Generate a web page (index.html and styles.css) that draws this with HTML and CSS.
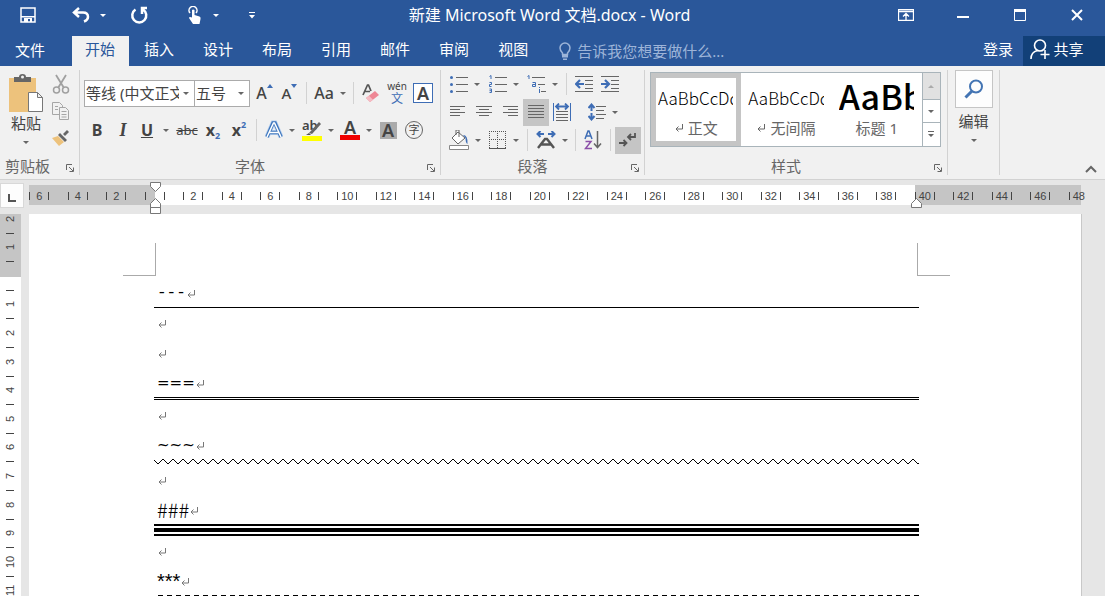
FILE: index.html
```html
<!DOCTYPE html>
<html lang="zh-CN">
<head>
  <meta charset="UTF-8">
  <meta name="viewport" content="width=device-width, initial-scale=1">
  <title>新建 Microsoft Word 文档.docx - Word</title>
  <link rel="stylesheet" href="styles.css">
</head>
<body>
  <svg class="defs" aria-hidden="true">
    <symbol id="ret" viewBox="0 0 8 8"><path d="M7.500 0v5H1M3.500 2.500L1 5l2.500 2.500" fill="none" stroke="currentColor"/></symbol>
    <symbol id="launch" viewBox="0 0 8 8"><path d="M.5 6V.5H6M3 3l4 4M7.500 3.500v4h-4" fill="none" stroke="currentColor"/></symbol>
  </svg>

  <!-- Thanh tiêu đề -->
  <header class="titlebar">
    <div class="quick">
      <button class="q-btn q-save" aria-label="保存"><svg width="16" height="16" viewBox="0 0 16 16"><path d="M1 1h14v14H1z" fill="none" stroke="#fff" stroke-width="1.500"/><path d="M1 9h14v1.500H1zM4 11h8v4h-2v-3H8v3H4z" fill="#fff"/></svg></button>
      <button class="q-btn q-undo" aria-label="撤消"><svg width="18" height="16" viewBox="0 0 18 16"><path d="M7 1L2 5.500 7 10M2 5.500h9q5 0 5 4.500 0 3-4 4.500" fill="none" stroke="#fff" stroke-width="2.500"/></svg><i class="caret"></i></button>
      <button class="q-btn q-redo" aria-label="重复"><svg width="18" height="18" viewBox="0 0 18 18"><path d="M5.500 3.500a7 7 0 1 0 7.500 0M12 8V2h5" fill="none" stroke="#fff" stroke-width="2.500"/></svg></button>
      <button class="q-btn q-touch" aria-label="触摸模式"><svg width="16" height="18" viewBox="0 0 16 18"><path d="M3 7a4 4 0 1 1 6 0" fill="none" stroke="#fff" stroke-width="1.500"/><path d="M5 4q1-1 2.500 0v5l5 1.500q1.500.5 1 2.500l-1 5H6l-4-6q0-1.500 3-.5z" fill="#fff"/></svg><i class="caret"></i></button>
      <button class="q-btn q-more" aria-label="自定义快速访问工具栏"><svg width="6" height="7" viewBox="0 0 6 7"><path d="M0 0h6v1H0zM0 3h6L3 6.500z" fill="#fff"/></svg></button>
    </div>
    <h1>新建 Microsoft Word 文档.docx - Word</h1>
    <div class="window-btns">
      <button aria-label="功能区显示选项"><svg width="16" height="12" viewBox="0 0 16 12"><path d="M.5.500h15v11H.500zM.500 2.500h15M8 11V5M5 7.500l3-3 3 3" fill="none" stroke="#fff" stroke-width="1.300"/></svg></button>
      <button aria-label="最小化"><svg width="12" height="12" viewBox="0 0 12 12"><path d="M0 7h12v2H0z" fill="#fff"/></svg></button>
      <button aria-label="最大化"><svg width="12" height="12" viewBox="0 0 12 12"><path d="M.5.500h11v11H.500z" fill="none" stroke="#fff"/><path d="M0 0h12v3H0z" fill="#fff"/></svg></button>
      <button aria-label="关闭"><svg width="12" height="12" viewBox="0 0 12 12"><path d="M1 1l10 10M11 1L1 11" stroke="#fff" stroke-width="2"/></svg></button>
    </div>
  </header>

  <!-- Các thẻ -->
  <nav class="tabs">
    <button class="tab file">文件</button>
    <button class="tab active">开始</button>
    <button class="tab">插入</button>
    <button class="tab">设计</button>
    <button class="tab">布局</button>
    <button class="tab">引用</button>
    <button class="tab">邮件</button>
    <button class="tab">审阅</button>
    <button class="tab">视图</button>
    <label class="tell">
      <svg width="12" height="18" viewBox="0 0 12 18"><path d="M3.500 12.500V11Q1 8.500 1 6a5 5 0 0 1 10 0q0 2.500-2.500 5v1.500z" fill="none" stroke="#9db4d8" stroke-width="1.500"/><path d="M3 13h6v2.500H3zM4 16.500h4V18H4z" fill="#9db4d8"/></svg>
      <input type="text" placeholder="告诉我您想要做什么..." aria-label="告诉我您想要做什么">
    </label>
    <button class="login">登录</button>
    <button class="share"><svg width="20" height="20" viewBox="0 0 20 20"><circle cx="10" cy="6.500" r="5.500" fill="none" stroke="#fff" stroke-width="1.600"/><path d="M1 20q0-7 6.500-8.500M15 11v9M10.500 15.500h9" fill="none" stroke="#fff" stroke-width="1.600"/></svg>共享</button>
  </nav>

  <!-- Ribbon -->
  <section class="ribbon">
    <div class="group clipboard">
      <div class="group-body">
        <button class="paste">
          <svg width="34" height="38" viewBox="0 0 34 38"><path d="M0 4h27v34H0z" fill="#edc27c"/><path d="M5 8V3h5q0-3 3.500-3T17 3h5v5z" fill="#666"/><circle cx="13.500" cy="3" r="1.500" fill="#f1f1f1"/><path d="M19.500 18.500h9l5 5v14h-14zM28.500 18.500v5h5" fill="#fff" stroke="#777"/></svg>
          粘贴
          <i class="caret"></i>
        </button>
        <div class="clip-tools">
          <button aria-label="剪切"><svg width="18" height="20" viewBox="0 0 18 20"><path d="M4 1l8 13M14 1L6 14" stroke="#a0a0a0" stroke-width="1.800"/><g fill="none" stroke="#a0a0a0" stroke-width="1.500"><circle cx="4.500" cy="16" r="3"/><circle cx="13.500" cy="16" r="3"/></g></svg></button>
          <button aria-label="复制"><svg width="18" height="18" viewBox="0 0 18 18"><g fill="#f1f1f1" stroke="#a6a6a6"><path d="M.5.500h7l3 3v9H.500z"/><path d="M7.500 5.500h6l3 3v9h-9z"/></g><path d="M3 4.500h3M3 7.500h3M9.500 9.500h5M9.500 12.500h5M9.500 15h5" stroke="#a6a6a6"/></svg></button>
          <button aria-label="格式刷"><svg width="18" height="18" viewBox="0 0 18 18"><path d="M0 9l6-2 6 6-5 4z" fill="#edc27c"/><path d="M6 6l2-2 7 7-2 2zM11 5l4-4 2 2-4 4z" fill="#666"/></svg></button>
        </div>
      </div>
      <div class="group-foot"><span>剪贴板</span><button class="launcher" aria-label="剪贴板设置"><svg width="8" height="8"><use href="#launch"/></svg></button></div>
    </div>

    <div class="group font">
      <div class="group-body">
        <div class="row">
          <label class="combo combo-font"><select aria-label="字体"><option>等线 (中文正文)</option></select><i class="caret"></i></label>
          <label class="combo combo-size"><select aria-label="字号"><option>五号</option></select><i class="caret"></i></label>
          <button class="tool grow" aria-label="增大字号"><b class="letter">A</b><svg width="6" height="4" viewBox="0 0 6 4"><path d="M0 4l3-4 3 4z" fill="#3e6db5"/></svg></button>
          <button class="tool grow" aria-label="缩小字号"><b class="letter small">A</b><svg width="6" height="4" viewBox="0 0 6 4"><path d="M0 0h6L3 4z" fill="#3e6db5"/></svg></button>
          <i class="sep"></i>
          <button class="tool split" aria-label="更改大小写"><span class="letter">Aa</span><i class="caret"></i></button>
          <i class="sep"></i>
          <button class="tool" aria-label="清除格式"><svg width="18" height="20" viewBox="0 0 18 20"><path d="M1 12L5.500 2h1L9 8M3 8.500h5" fill="none" stroke="#555" stroke-width="1.700"/><path d="M4 15l9-7 4 4-9 7z" fill="#ee8795"/><path d="M4 15l3-2.300 4 4L8 19z" fill="#f6bcc4"/></svg></button>
          <button class="tool pinyin" aria-label="拼音指南"><span>wén</span><em>文</em></button>
          <button class="tool" aria-label="字符边框"><b class="boxed">A</b></button>
        </div>
        <div class="row">
          <button class="tool bold">B</button>
          <button class="tool italic">I</button>
          <button class="tool split underline"><u>U</u><i class="caret"></i></button>
          <button class="tool strike">abc</button>
          <button class="tool script">x<sub>2</sub></button>
          <button class="tool script">x<sup>2</sup></button>
          <i class="sep"></i>
          <button class="tool split" aria-label="文本效果"><svg width="18" height="20" viewBox="0 0 18 20"><path d="M2 17L8 3h2l6 14M4.500 12.500h9" fill="none" stroke="#b8d0ee" stroke-width="5"/><path d="M2 17L8 3h2l6 14M4.500 12.500h9" fill="none" stroke="#3e76bd" stroke-width="3.500"/><path d="M2 17L8.500 3h1L16 17M4.500 12.500h9" fill="none" stroke="#fff" stroke-width="1.500"/></svg><i class="caret"></i></button>
          <button class="tool split highlight" aria-label="突出显示"><span>ab</span><svg width="20" height="20" viewBox="0 0 20 20"><path d="M7 12L17 1l2 2L10 13z" fill="#666"/><path d="M4 14l3-2 2 2z" fill="#555"/><path d="M0 15h20v5H0z" fill="#ff0"/></svg><i class="caret"></i></button>
          <button class="tool split" aria-label="字体颜色"><b class="colored">A</b><i class="caret"></i></button>
          <button class="tool" aria-label="字符底纹"><b class="shaded">A</b></button>
          <button class="tool" aria-label="带圈字符"><span class="circled">字</span></button>
        </div>
      </div>
      <div class="group-foot"><span>字体</span><button class="launcher" aria-label="字体设置"><svg width="8" height="8"><use href="#launch"/></svg></button></div>
    </div>

    <div class="group para">
      <div class="group-body">
        <div class="row">
          <button class="tool split" aria-label="项目符号"><svg width="18" height="18" viewBox="0 0 18 18"><path d="M6 2.500h12M6 9.500h12M6 16.500h12" stroke="#666"/><g fill="#3e6db5"><circle cx="1.500" cy="2.500" r="1.500"/><circle cx="1.500" cy="9.500" r="1.500"/><circle cx="1.500" cy="16.500" r="1.500"/></g></svg><i class="caret"></i></button>
          <button class="tool split" aria-label="编号"><svg width="18" height="18" viewBox="0 0 18 18"><path d="M6 2.500h12M6 9.500h12M6 16.500h12" stroke="#666"/><path d="M.5 1.500L2 .5V4M.500 7.500h2v2h-2v2h2M.500 14h2v3.500h-2M.500 15.700h2" fill="none" stroke="#3e6db5"/></svg><i class="caret"></i></button>
          <button class="tool split" aria-label="多级列表"><svg width="19" height="18" viewBox="0 0 19 18"><path d="M5 2.500h13M11 9.500h7M14 16.500h5" stroke="#666"/><path d="M.5 1.500L2 .5V4M5.500 7.500h3v4h-3v-2h3M12.500 14v4M12.500 12v1" fill="none" stroke="#3e6db5"/></svg><i class="caret"></i></button>
          <i class="sep"></i>
          <button class="tool" aria-label="减少缩进量"><svg width="18" height="16" viewBox="0 0 18 16"><path d="M0 .5h18M10 4.500h8M10 8.500h8M10 12.500h8M0 15.500h18" stroke="#666"/><path d="M9 8H2M5 4L1 8l4 4" fill="none" stroke="#3e6db5" stroke-width="2.200"/></svg></button>
          <button class="tool" aria-label="增加缩进量"><svg width="18" height="16" viewBox="0 0 18 16"><path d="M0 .5h18M10 4.500h8M10 8.500h8M10 12.500h8M0 15.500h18" stroke="#666"/><path d="M0 8h7M4 4l4 4-4 4" fill="none" stroke="#3e6db5" stroke-width="2.200"/></svg></button>
        </div>
        <div class="row">
          <button class="tool" aria-label="左对齐"><svg width="16" height="12" viewBox="0 0 16 12"><path d="M0 .5h15M0 3.500h10M0 6.500h15M0 9.500h10" stroke="#666"/></svg></button>
          <button class="tool" aria-label="居中"><svg width="16" height="12" viewBox="0 0 16 12"><path d="M0 .5h16M3 3.500h10M0 6.500h16M3 9.500h10" stroke="#666"/></svg></button>
          <button class="tool" aria-label="右对齐"><svg width="16" height="12" viewBox="0 0 16 12"><path d="M1 .5h15M6 3.500h10M1 6.500h15M6 9.500h10" stroke="#666"/></svg></button>
          <button class="tool on" aria-label="两端对齐"><svg width="16" height="14" viewBox="0 0 16 14"><path d="M0 .5h16M0 3.500h16M0 6.500h16M0 9.500h16M0 12.500h16" stroke="#666"/></svg></button>
          <button class="tool" aria-label="分散对齐"><svg width="18" height="18" viewBox="0 0 18 18"><path d="M.5 0v18M17.500 0v18" stroke="#3e6db5"/><path d="M3 3.500h12M6 .5l-3 3 3 3M12 .5l3 3-3 3" fill="none" stroke="#3e6db5" stroke-width="1.800"/><path d="M3 8.500h12M3 11.500h12M3 14.500h12M3 17.500h12" stroke="#666"/></svg></button>
          <button class="tool split spacing" aria-label="行距"><svg width="18" height="18" viewBox="0 0 18 18"><path d="M3.500 1v16M.500 5l3-3.500 3 3.500M.500 13l3 3.500 3-3.500" fill="none" stroke="#3e6db5" stroke-width="2"/><path d="M2 8h3v2H2z" fill="#f1f1f1"/><path d="M8 3.500h10M8 7.500h8M8 11.500h10M8 15.500h8" stroke="#666"/></svg><i class="caret"></i></button>
        </div>
        <div class="row">
          <button class="tool split" aria-label="底纹"><svg width="20" height="20" viewBox="0 0 20 20"><path d="M3 8l6-6 7 6-7 6zM7 5V0h3v7" fill="#fff" stroke="#666"/><path d="M14 5q5 0 4.500 9-2-1-2-6z" fill="#3e6db5"/><path d="M.5 15.500h19v4H.500z" fill="#fff" stroke="#888"/></svg><i class="caret"></i></button>
          <button class="tool split" aria-label="边框"><svg width="18" height="18" viewBox="0 0 18 18"><path d="M0 .5h17M.5 0v17M16.500 0v17M8.500 0v17M0 8.500h17" fill="none" stroke="#555" stroke-dasharray="1 1"/><path d="M0 17.500h17" stroke="#555"/></svg><i class="caret"></i></button>
          <i class="sep"></i>
          <button class="tool split wide-a" aria-label="中文版式"><svg width="20" height="18" viewBox="0 0 20 18"><path d="M8 3H2M4.500 0L1.500 3l3 3M12 3h6M15.500 0l3 3-3 3" fill="none" stroke="#3e6db5" stroke-width="2"/><path d="M2 17L9 8h2l7 9M5 13.500h10" fill="none" stroke="#555" stroke-width="2.400"/></svg><i class="caret"></i></button>
          <i class="sep"></i>
          <button class="tool" aria-label="排序"><svg width="18" height="20" viewBox="0 0 18 20"><path d="M1 9l3-8h1l3 8M2 6h5" fill="none" stroke="#3e6db5" stroke-width="1.500"/><path d="M1.500 11.500H7L1.500 18.500H8" fill="none" stroke="#8b4fa8" stroke-width="1.500"/><path d="M13.500 1v16M10 13.500l3.500 4 3.500-4" fill="none" stroke="#666" stroke-width="1.500"/></svg></button>
          <i class="sep"></i>
          <button class="tool on" aria-label="显示编辑标记"><svg width="18" height="16" viewBox="0 0 18 16"><path d="M16 1v4H9M12 2L9 5l3 3M0 11h7M4.500 8l3 3-3 3" fill="none" stroke="#555" stroke-width="1.800"/></svg></button>
        </div>
      </div>
      <div class="group-foot"><span>段落</span><button class="launcher" aria-label="段落设置"><svg width="8" height="8"><use href="#launch"/></svg></button></div>
    </div>

    <div class="group styles">
      <div class="group-body">
        <div class="gallery">
          <button class="style selected"><span class="preview">AaBbCcDd</span><span class="style-name"><svg width="8" height="8"><use href="#ret"/></svg>正文</span></button>
          <button class="style"><span class="preview">AaBbCcDd</span><span class="style-name"><svg width="8" height="8"><use href="#ret"/></svg>无间隔</span></button>
          <button class="style"><span class="preview heading">AaBb</span><span class="style-name">标题 1</span></button>
          <div class="gallery-scroll">
            <button disabled aria-label="向上"><i class="caret up"></i></button>
            <button aria-label="向下"><i class="caret"></i></button>
            <button aria-label="其他"><svg width="6" height="7" viewBox="0 0 6 7"><path d="M0 0h6v1H0zM0 3h6L3 6z" fill="#666"/></svg></button>
          </div>
        </div>
      </div>
      <div class="group-foot"><span>样式</span><button class="launcher" aria-label="样式设置"><svg width="8" height="8"><use href="#launch"/></svg></button></div>
    </div>

    <div class="group edit">
      <button class="find">
        <span class="find-icon"><svg width="20" height="20" viewBox="0 0 20 20"><circle cx="12" cy="7.500" r="6" fill="none" stroke="#4374b3" stroke-width="2"/><path d="M8 12l-6.500 6.500" stroke="#4374b3" stroke-width="3"/></svg></span>
        编辑
        <i class="caret"></i>
      </button>
    </div>
    <button class="collapse" aria-label="折叠功能区"><svg width="12" height="8" viewBox="0 0 12 8"><path d="M1 7l5-5 5 5" fill="none" stroke="#666" stroke-width="2"/></svg></button>
  </section>

  <!-- Vùng soạn thảo -->
  <main class="workspace">
    <div class="corner"><button aria-label="制表符"><svg width="8" height="8" viewBox="0 0 8 8"><path d="M1 0v7h7" fill="none" stroke="#555" stroke-width="2"/></svg></button></div>
    <div class="ruler">
      <div class="ruler-labels">
        <span>6</span><span>4</span><span>2</span><span></span><span>2</span><span>4</span><span>6</span><span>8</span><span>10</span><span>12</span><span>14</span><span>16</span><span>18</span><span>20</span><span>22</span><span>24</span><span>26</span><span>28</span><span>30</span><span>32</span><span>34</span><span>36</span><span>38</span><span>40</span><span>42</span><span>44</span><span>46</span><span>48</span>
      </div>
      <svg class="indent-left" width="12" height="32" viewBox="0 0 12 32"><path d="M1.500.500h10v4l-5 5-5-5zM1.500 25.500v-4l5-5 5 5v4zM1.500 25.500h10v6h-10z" fill="#fff" stroke="#777"/></svg>
      <svg class="indent-right" width="12" height="10" viewBox="0 0 12 10"><path d="M.5 9.500v-4l5-5 5 5v4z" fill="#fff" stroke="#777"/></svg>
    </div>
    <div class="v-ruler">
      <div class="v-labels">
        <span>2</span><span>1</span><span></span><span>1</span><span>2</span><span>3</span><span>4</span><span>5</span><span>6</span><span>7</span><span>8</span><span>9</span><span>10</span><span>11</span>
      </div>
    </div>
    <article class="page">
      <div class="crop-marks"><i></i><i></i></div>
      <div class="text">
        <p class="ruled dash">---<svg class="ret"><use href="#ret"/></svg></p>
        <hr class="thin">
        <p><svg class="ret"><use href="#ret"/></svg></p>
        <p><svg class="ret"><use href="#ret"/></svg></p>
        <p class="ruled wide">===<svg class="ret"><use href="#ret"/></svg></p>
        <hr class="double">
        <p><svg class="ret"><use href="#ret"/></svg></p>
        <p class="ruled wide">~~~<svg class="ret"><use href="#ret"/></svg></p>
        <svg class="wave" height="6"><defs><pattern id="zig" width="10" height="6" patternUnits="userSpaceOnUse"><path d="M-1 0L4 5 9 0 14 5" fill="none" stroke="#000"/></pattern></defs><rect width="100%" height="6" fill="url(#zig)"/></svg>
        <p><svg class="ret"><use href="#ret"/></svg></p>
        <p class="ruled hash">###<svg class="ret"><use href="#ret"/></svg></p>
        <hr class="triple">
        <p><svg class="ret"><use href="#ret"/></svg></p>
        <p class="ruled">***<svg class="ret"><use href="#ret"/></svg></p>
        <hr class="dashed">
      </div>
    </article>
  </main>
</body>
</html>
```
FILE: styles.css
```css
* {
  margin: 0;
  padding: 0;
  box-sizing: border-box;
}
body {
  display: flex;
  flex-direction: column;
  height: 100vh;
  overflow: hidden;
  background: #e6e6e6;
  color: #444;
  font: 15px/20px "Noto Sans", "Noto Sans CJK SC", sans-serif;
}
button, input, select {
  border: none;
  background: none;
  color: inherit;
  font: inherit;
}
button {
  display: flex;
  align-items: center;
  justify-content: center;
}
svg {
  display: block;
  flex: none;
}
.defs {
  position: absolute;
  width: 0;
  height: 0;
}
.caret {
  flex: none;
  border: 3px solid transparent;
  border-top-color: #666;
  border-bottom: none;
}

/* title bar */
.titlebar {
  display: grid;
  grid-template-columns: 1fr auto 1fr;
  align-items: center;
  height: 30px;
  background: #2a579a;
  color: #fff;
}
.titlebar h1 {
  margin-right: 6px;
  font-size: 16px;
  font-weight: normal;
}
.titlebar .caret {
  border-top-color: #fff;
}
.quick, .window-btns {
  display: flex;
}
.window-btns {
  justify-content: flex-end;
}
.window-btns button {
  width: 57px;
  height: 28px;
}
.q-btn {
  gap: 10px;
  height: 28px;
}
.q-save {
  width: 56px;
}
.q-undo {
  width: 66px;
}
.q-redo {
  width: 34px;
}
.q-touch {
  width: 94px;
}
.q-more {
  width: 4px;
}

/* tabs */
.tabs {
  display: flex;
  align-items: flex-end;
  gap: 2px;
  height: 36px;
  background: #2a579a;
  color: #fff;
}
.tab {
  height: 30px;
  padding: 0 14px 4px 13px;
}
.tab.file {
  padding: 0 25px 2px 15px;
}
.tab.active {
  background: #f1f1f1;
  color: #2a579a;
}
.tell {
  display: flex;
  flex: 1;
  align-items: center;
  gap: 6px;
  height: 30px;
  padding-left: 15px;
}
.tell input {
  flex: 1;
  min-width: 0;
}
.tell input::placeholder {
  color: #9db4d8;
}
.login {
  height: 30px;
  padding: 0 8px 4px;
}
.share {
  gap: 3px;
  width: 82px;
  height: 30px;
  padding: 0 14px 4px 0;
  background: #124078;
}

/* ribbon */
.ribbon {
  display: flex;
  height: 114px;
  padding: 4px 0;
  background: #f1f1f1;
  border-bottom: 1px solid #d2d2d2;
}
.group {
  display: flex;
  flex-direction: column;
  border-right: 1px solid #d2d2d2;
}
.group-body {
  flex: 1;
}
.group-foot {
  display: flex;
  align-items: center;
  height: 18px;
  padding: 0 5px;
  color: #666;
}
.group-foot span {
  flex: 1;
  padding-right: 12px;
  text-align: center;
}
.launcher {
  width: 8px;
  height: 16px;
  padding-top: 4px;
}
.row {
  display: flex;
  align-items: center;
  height: 28px;
}
.tool {
  flex: none;
  width: 26px;
  height: 27px;
}
.split {
  width: 39px;
  gap: 6px;
}
.sep {
  flex: none;
  width: 1px;
  height: 22px;
  margin: 0 4px;
  background: #d2d2d2;
}
.on {
  background: #c5c5c5;
}

.clipboard {
  width: 80px;
}
.clipboard .group-body {
  display: flex;
  gap: 8px;
  padding: 4px 8px 0;
}
.paste {
  flex-direction: column;
  align-self: flex-start;
  width: 36px;
}
.paste svg {
  margin-bottom: 1px;
}
.paste .caret {
  margin-top: 8px;
}
.clip-tools button {
  width: 18px;
  height: 27px;
  padding-bottom: 7px;
}
.clipboard .group-foot span {
  padding: 0;
  text-align: left;
}

.font {
  width: 361px;
}
.font .group-body {
  display: flex;
  flex-direction: column;
  gap: 9px;
  padding: 9px 4px 0;
}
.font .split {
  width: 38px;
}
.combo {
  position: relative;
  flex: none;
  height: 27px;
  background: #fff;
  border: 1px solid #ababab;
}
.combo select {
  width: 100%;
  height: 100%;
  padding: 0 15px 0 1px;
  appearance: none;
}
.combo .caret {
  position: absolute;
  top: 11px;
  right: 5px;
}
.combo-font {
  width: 111px;
}
.combo-size {
  width: 56px;
  margin: 0 2px 0 -1px;
}
.letter {
  font-size: 16px;
  font-weight: 500;
}
.letter.small {
  font-size: 15px;
}
.tool.grow {
  width: 25px;
}
.grow svg {
  align-self: flex-start;
  margin-top: 4px;
}
.pinyin {
  flex-direction: column;
  font-size: 10px;
  line-height: 11px;
}
.pinyin em {
  color: #3e6db5;
  font-size: 12px;
  font-style: normal;
  line-height: 13px;
}
.boxed {
  width: 20px;
  height: 20px;
  border: 1px solid #3e6db5;
  background: #fff;
  font-size: 18px;
  font-weight: 600;
  line-height: 18px;
}
.bold {
  font-size: 16px;
  font-weight: bold;
}
.italic {
  font-family: "Liberation Serif", serif;
  font-size: 18px;
  font-style: italic;
  font-weight: bold;
}
.underline {
  gap: 10px;
  font-size: 16px;
  font-weight: bold;
}
.strike {
  font-size: 13px;
  text-decoration: line-through;
}
.script {
  font-size: 16px;
  font-weight: bold;
}
.script sub, .script sup {
  color: #3e6db5;
  font-size: 9px;
  line-height: 8px;
}
.script sub {
  align-self: flex-end;
  margin-bottom: 4px;
}
.script sup {
  align-self: flex-start;
  margin-top: 4px;
}
.highlight span {
  width: 0;
  align-self: flex-start;
  font-size: 13px;
  font-weight: 600;
  line-height: 14px;
}
.highlight {
  gap: 0;
  padding-top: 1px;
}
.highlight .caret {
  margin-left: 6px;
}
.colored {
  width: 20px;
  height: 20px;
  border-bottom: 5px solid #f00000;
  font-size: 18px;
  font-weight: 600;
  line-height: 14px;
}
.shaded {
  width: 17px;
  height: 17px;
  background: #ababab;
  font-size: 18px;
  font-weight: 600;
  line-height: 17px;
}
.circled {
  width: 18px;
  height: 18px;
  border: 1px solid #666;
  border-radius: 50%;
  font-size: 11px;
  line-height: 16px;
}

.para {
  width: 204px;
}
.para .group-body {
  padding: 0 4px;
}
.spacing {
  margin-left: 8px;
}

.styles {
  width: 303px;
}
.styles .group-body {
  padding: 2px 6px 0 5px;
}
.gallery {
  display: flex;
  height: 75px;
  background: #fff;
  border: 1px solid #a9b4ba;
}
.style {
  flex: 1;
  flex-direction: column;
  min-width: 0;
  border: 5px solid transparent;
}
.style.selected {
  border-color: #c5c5c5;
}
.preview {
  width: 100%;
  height: 36px;
  padding: 0 3px 0 2px;
  overflow: clip;
  overflow-clip-margin: content-box;
  color: #000;
  font: 300 17px/38px "Noto Sans CJK SC", sans-serif;
  text-align: left;
}
.preview.heading {
  font-size: 34px;
  font-weight: 500;
  line-height: 34px;
}
.style-name {
  display: flex;
  align-items: center;
  gap: 5px;
  height: 26px;
  color: #666;
}
.gallery-scroll {
  display: grid;
  grid-template-rows: 26px 23px 1fr;
  width: 18px;
  border-left: 1px solid #a9b4ba;
}
.gallery-scroll button + button {
  border-top: 1px solid #a9b4ba;
}
.gallery-scroll button:disabled {
  background: #e1e1e1;
}
.caret.up {
  border-top-color: #ababab;
  transform: rotate(180deg);
}

.edit {
  width: 52px;
  align-items: center;
}
.find {
  flex-direction: column;
}
.find-icon {
  display: flex;
  align-items: center;
  justify-content: center;
  width: 38px;
  height: 38px;
  margin-bottom: 3px;
  background: #fdfdfd;
  border: 1px solid #c5c5c5;
}
.find .caret {
  margin-top: 8px;
}
.collapse {
  align-self: flex-end;
  margin: 0 8px 2px auto;
}

/* workspace */
.workspace {
  display: grid;
  flex: 1;
  grid-template-columns: 29px 1fr;
  grid-template-rows: 34px 1fr;
  min-height: 0;
  padding-right: 24px;
}
.corner {
  padding-top: 3px;
}
.corner button {
  width: 24px;
  height: 25px;
  padding-top: 4px;
  background: #fdfdfd;
  border: 1px solid #d8d8d8;
}
.ruler {
  position: relative;
  height: 20px;
  margin-top: 5px;
  background: linear-gradient(to right, #c5c5c5 126px, #fff 126px, #fff calc(100% - 166px), #c5c5c5 calc(100% - 166px));
}
.ruler-labels {
  display: flex;
  align-items: center;
  height: 22px;
  margin: 0 -17px 0 -9px;
  color: #444;
  font: 11px/8px "Liberation Sans", sans-serif;
}
.ruler-labels span {
  flex: 1;
  height: 8px;
  background:
    linear-gradient(#444, #444) 25% 0 / 1px 8px no-repeat,
    linear-gradient(#444, #444) 75% 0 / 1px 8px no-repeat;
  text-align: center;
}
.ruler-labels span:last-child {
  background: linear-gradient(#444, #444) 25% 0 / 1px 8px no-repeat;
}
.indent-left {
  position: absolute;
  top: -3px;
  left: 120px;
}
.indent-right {
  position: absolute;
  top: 13px;
  right: 158px;
}
.v-ruler {
  width: 21px;
  overflow: hidden;
  background: linear-gradient(#c5c5c5 63px, #fff 63px);
}
.v-labels {
  margin-top: -10px;
  color: #444;
  font: 11px/21px "Liberation Sans", sans-serif;
}
.v-labels span {
  display: block;
  width: 21px;
  height: 29px;
  background: linear-gradient(#444, #444) 50% 100% / 8px 1px no-repeat;
  text-align: center;
  writing-mode: vertical-rl;
  transform: rotate(180deg);
}
.v-labels span:nth-child(5n+2), .v-labels span:nth-child(5n+4) {
  height: 28px;
}
.page {
  overflow: hidden;
  background: #fff;
  box-shadow: 1px 0 0 #c8c8c8;
}
.crop-marks {
  display: flex;
  justify-content: space-between;
  padding: 29px 131px 2px 94px;
}
.crop-marks i {
  width: 33px;
  height: 33px;
  border: solid #aaa;
  border-width: 0 1px 1px 0;
}
.crop-marks i + i {
  border-width: 0 0 1px 1px;
}
.text {
  padding: 0 162px 0 125px;
  color: #000;
}
.text p {
  display: flex;
  align-items: center;
  height: 30px;
  padding-left: 3px;
  font: 20px/30px "Liberation Sans", sans-serif;
}
.text p.ruled {
  height: 29px;
}
.text p.dash {
  font-family: "Liberation Mono", monospace;
  font-size: 16px;
}
.text p.wide {
  font-family: "DejaVu Sans", sans-serif;
  font-size: 15px;
}
.text p.hash {
  font-family: "Noto Sans CJK SC", sans-serif;
  font-weight: 300;
}
.ret {
  width: 8px;
  height: 8px;
  margin: 2px 0 0 1px;
  color: #777;
}
hr {
  border: none;
}
.thin {
  border-top: 1px solid #000;
}
.double {
  border-top: 3px double #000;
}
.wave {
  width: 100%;
}
.triple {
  height: 12px;
  border: solid #000;
  border-width: 2px 0;
  background: linear-gradient(#000, #000) 0 2px / 100% 4px no-repeat;
}
.dashed {
  height: 1px;
  margin-left: 4px;
  background: repeating-linear-gradient(to right, #000 0 5px, #fff 5px 9px);
}
```
